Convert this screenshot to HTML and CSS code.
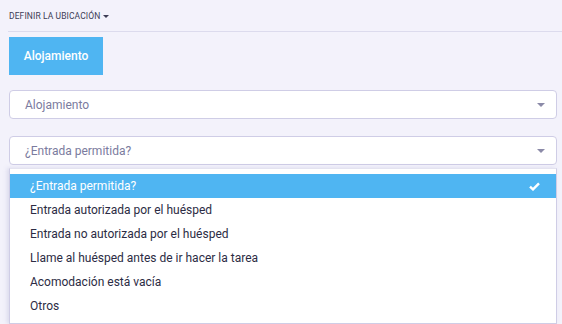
FILE: index.html
```html
<!DOCTYPE html>
<html lang="es">
<head>
<meta charset="utf-8">
<link rel="stylesheet" href="styles.css">
</head>
<body>
<div class="page">
  <div class="header">DEFINIR LA UBICACIÓN <span class="caret"></span></div>
  <div class="content">
    <button class="tab">Alojamiento</button>
    <div class="select sel1"><span>Alojamiento</span><span class="arrow"></span></div>
    <div class="select sel2"><span>¿Entrada permitida?</span><span class="arrow"></span></div>
    <ul class="menu">
      <li class="active"><span>¿Entrada permitida?</span>
        <svg class="check" width="11" height="9" viewBox="0 0 11 9"><path d="M1 4.6 L4 7.4 L10 1.4" fill="none" stroke="#fff" stroke-width="2.4"/></svg>
      </li>
      <li>Entrada autorizada por el huésped</li>
      <li>Entrada no autorizada por el huésped</li>
      <li>Llame al huésped antes de ir hacer la tarea</li>
      <li>Acomodación está vacía</li>
      <li>Otros</li>
    </ul>
  </div>
</div>
</body>
</html>
```
FILE: styles.css
```css
html, body { margin: 0; padding: 0; }
body {
  background: #f3f2fb;
  font-family: Roboto, "Noto Sans", sans-serif;
  width: 562px;
  height: 324px;
  overflow: hidden;
}
.page { padding-left: 8px; }
.header {
  height: 32px;
  box-sizing: border-box;
  padding: 11px 0 0 1px;
  font-size: 8.5px;
  color: #3c3c55;
  letter-spacing: 0.1px;
  border-bottom: 1px solid #dcdbed;
  display: flex;
  align-items: flex-start;
}
.caret {
  display: inline-block;
  margin: 4px 0 0 3px;
  border-left: 3px solid transparent;
  border-right: 3px solid transparent;
  border-top: 3px solid #3c3c55;
}
.content { padding: 5px 5px 0 1px; }
.tab {
  display: block;
  width: 94px;
  height: 38px;
  border: 0;
  border-radius: 0;
  background: #4fb5f2;
  color: #fff;
  font-family: inherit;
  font-size: 12px;
  font-weight: 500;
  padding: 0;
}
.select {
  height: 29px;
  box-sizing: border-box;
  border: 1px solid #cfcde6;
  border-radius: 4px;
  background: #fff;
  display: flex;
  align-items: center;
  justify-content: space-between;
  padding: 0 11px 0 15px;
  font-size: 12px;
  color: #7b7b9e;
}
.sel1 { margin-top: 15px; }
.sel2 { margin-top: 17px; }
.arrow {
  border-left: 4px solid transparent;
  border-right: 4px solid transparent;
  border-top: 4px solid #8b8aa8;
}
.menu {
  list-style: none;
  margin: 3px 0 0 0;
  padding: 5px 0 5px;
  background: #fff;
  border: 1px solid #cfcde6;
  border-top-color: #e4e3f0;
  box-shadow: -2px 0 4px rgba(150,150,200,0.25);
  font-size: 12px;
  color: #2c2c44;
}
.menu li {
  height: 24px;
  display: flex;
  align-items: center;
  justify-content: space-between;
  padding: 0 16px 0 20px;
}
.menu li.active {
  background: #4fb5f2;
  color: #fff;
}
.check { display: block; }
```
